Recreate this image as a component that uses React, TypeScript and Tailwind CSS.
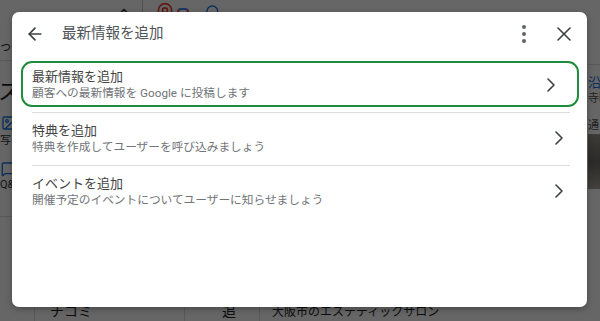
import { ArrowLeft, ChevronRight, EllipsisVertical, X, Search, MapPin, Image as ImageIcon, MessageSquare, ChevronUp } from 'lucide-react';

const font = { fontFamily: 'Roboto, "Noto Sans CJK JP", sans-serif' };

// ── Menu rows ────────────────────────────────────────────────────────────────
const items = [
  { title: '最新情報を追加', sub: '顧客への最新情報を Google に投稿します', active: true },
  { title: '特典を追加', sub: '特典を作成してユーザーを呼び込みましょう' },
  { title: 'イベントを追加', sub: '開催予定のイベントについてユーザーに知らせましょう' },
];

function Row({ title, sub, active = false }: { title: string; sub: string; active?: boolean }) {
  if (active) {
    return (
      <button className="mx-[9px] mr-[8px] flex h-[46px] items-center rounded-[11px] border-2 border-[#1e8e3e] pl-[9px] pr-[14px] pt-[1px] text-left">
        <div className="flex-1">
          <div className="text-[13px] leading-[17px] text-[#444]">{title}</div>
          <div className="text-[11.7px] leading-[16px] text-[#707478]">{sub}</div>
        </div>
        <ChevronRight className="h-6 w-6 text-[#3c4043]" strokeWidth={1.6} />
      </button>
    );
  }
  return (
    <button className="mx-[20px] mr-[17px] flex h-[53px] items-center border-t border-[#dadce0] pb-[2px] text-left">
      <div className="flex-1">
        <div className="text-[13px] leading-[17px] text-[#444]">{title}</div>
        <div className="text-[11.7px] leading-[16px] text-[#707478]">{sub}</div>
      </div>
      <ChevronRight className="-mr-[1px] h-6 w-6 text-[#3c4043]" strokeWidth={1.6} />
    </button>
  );
}

// ── Page behind the dialog ───────────────────────────────────────────────────
function BackgroundPage() {
  return (
    <div className="flex h-full w-full flex-col bg-white">
      <div className="flex h-[14px] shrink-0 items-end overflow-hidden">
        <ChevronUp className="ml-[114px] -mb-[8px] h-5 w-5 text-[#333]" />
        <div className="ml-[8px] h-full w-px bg-[#ccc]" />
        <MapPin className="ml-[12px] -mb-[8px] h-5 w-5 text-[#ea4335]" />
        <div className="ml-[2px] -mb-[6px] h-3 w-3 rounded-sm border-2 border-[#ea4335] border-t-[#4285f4]" />
        <Search className="ml-[16px] -mb-[6px] h-4 w-4 text-[#1a73e8]" />
      </div>
      <div className="flex flex-1">
        <div className="flex w-[35px] flex-col overflow-hidden border-r border-[#ddd]">
          <div className="mt-[22px] -ml-[1px] text-[13px] text-[#333]">っ</div>
          <div className="mt-[4px] h-px w-full bg-[#ddd]" />
          <div className="mt-[20px] -ml-[2px] text-[22px] leading-none text-[#222]">ス</div>
          <ImageIcon className="mt-[12px] ml-[1px] h-4 w-4 text-[#1a73e8]" />
          <div className="mt-[2px] text-[11px] text-[#333]">写</div>
          <MessageSquare className="mt-[12px] ml-[1px] h-4 w-4 text-[#1a73e8]" />
          <div className="text-[11px] text-[#333]">Q&A</div>
          <div className="mt-[22px] h-px w-full bg-[#ddd]" />
        </div>
        <div className="flex flex-1 flex-col">
          <div className="flex-1" />
          <div className="flex h-[22px] items-start text-[#222]">
            <div className="h-full w-[150px] border-r border-[#ddd] pl-[15px] pt-[3px] text-[14px] leading-[18px]">チコミ</div>
            <div className="h-full w-[75px] border-r border-[#ddd] pl-[37px] pt-[3px] text-[14px] leading-[18px]">追</div>
            <div className="pl-[12px] pt-[5px] text-[12px] leading-[16px]">大阪市のエステティックサロン</div>
          </div>
        </div>
        <div className="flex w-[12px] flex-col overflow-hidden">
          <div className="mt-[50px] h-px w-full bg-[#ddd]" />
          <div className="mt-[10px] whitespace-nowrap text-[13px] leading-[16px] text-[#1a73e8]">沿垣</div>
          <div className="whitespace-nowrap text-[11px] text-[#555]">寺町</div>
          <div className="mt-[10px] whitespace-nowrap text-[11px] text-[#555]">通り</div>
          <div className="h-[55px] w-full bg-gradient-to-b from-[#9a948c] via-[#6f6a64] to-[#a9a39b]" />
        </div>
      </div>
    </div>
  );
}

// ── App ───────────────────────────────────────────────────────────────────────
export default function App() {
  return (
    <div className="relative h-[321px] w-[600px] overflow-hidden" style={font}>
      <BackgroundPage />

      {/* scrim + dialog */}
      <div className="absolute inset-0 bg-black/60">
        <div className="absolute left-[12px] top-[12px] flex h-[295px] w-[575px] flex-col rounded-[7px] bg-white shadow-[0_2px_6px_rgba(0,0,0,0.3)]">
          <div className="flex h-[44px] shrink-0 items-center pl-[13px] pr-[11px]">
            <ArrowLeft className="h-5 w-5 text-[#3c4043]" strokeWidth={2} />
            <h2 className="ml-[17px] flex-1 text-[14.5px] text-[#505458]">最新情報を追加</h2>
            <EllipsisVertical className="h-6 w-6 text-[#5f6368]" strokeWidth={2} />
            <X className="ml-[16px] h-6 w-6 text-[#3c4043]" strokeWidth={1.6} />
          </div>
          <div className="mt-[5px] flex flex-col gap-[5px]">
            <Row {...items[0]} />
            <div className="flex flex-col">
              <Row {...items[1]} />
              <Row {...items[2]} />
            </div>
          </div>
        </div>
      </div>
    </div>
  );
}
